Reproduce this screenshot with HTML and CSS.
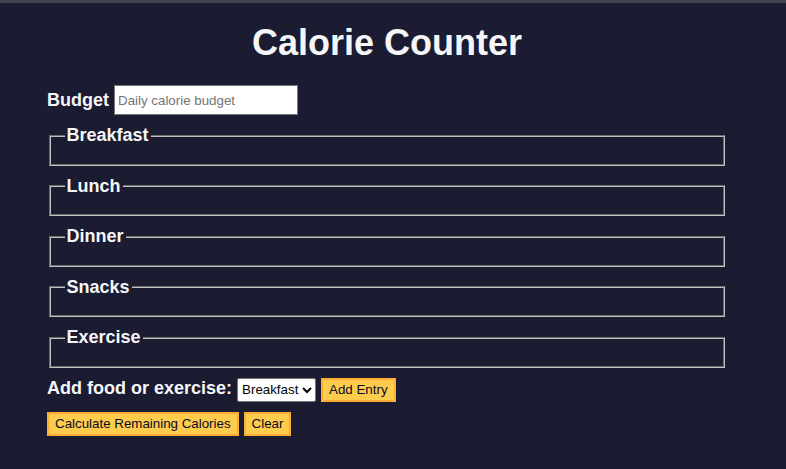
FILE: index.html
```html
<!DOCTYPE html>
<html lang="en">
<head>
<meta charset="utf-8">
<title>Calorie Counter</title>
<link rel="stylesheet" href="styles.css">
</head>
<body>
<div class="topbar"></div>
<main class="page">
  <h1 class="title">Calorie Counter</h1>
  <form class="container">
    <div class="budget-row">
      <label class="label" for="budget">Budget</label>
      <input class="budget-input" type="number" id="budget" placeholder="Daily calorie budget">
    </div>
    <fieldset class="meal"><legend class="legend">Breakfast</legend></fieldset>
    <fieldset class="meal"><legend class="legend">Lunch</legend></fieldset>
    <fieldset class="meal"><legend class="legend">Dinner</legend></fieldset>
    <fieldset class="meal"><legend class="legend">Snacks</legend></fieldset>
    <fieldset class="meal"><legend class="legend">Exercise</legend></fieldset>
    <div class="controls">
      <label class="label" for="entry-dropdown">Add food or exercise:</label>
      <select class="dropdown" id="entry-dropdown">
        <option>Breakfast</option>
        <option>Lunch</option>
        <option>Dinner</option>
        <option>Snacks</option>
        <option>Exercise</option>
      </select>
      <button class="btn" type="button">Add Entry</button>
    </div>
    <div class="actions">
      <button class="btn" type="button">Calculate Remaining Calories</button>
      <button class="btn" type="button">Clear</button>
    </div>
  </form>
</main>
</body>
</html>
```

FILE: styles.css
```css
html, body {
  margin: 0;
  padding: 0;
  background: #1b1b32;
}

body {
  color: #f5f6f7;
  font-family: "Liberation Sans", Arial, sans-serif;
  font-size: 18px;
  min-height: 469px;
}

.topbar {
  height: 3px;
  background: #42424c;
}

.page {
  width: 758px;
  margin-left: 8px;
}

.title {
  font-size: 36px;
  font-weight: bold;
  text-align: center;
  margin: 19px 0 22px;
  line-height: 41px;
}

.container {
  width: 680px;
  margin: 0 auto;
}

.label {
  font-weight: bold;
  font-size: 18px;
}

.budget-row {
  display: flex;
  align-items: center;
  gap: 5px;
  height: 30px;
  margin-bottom: 10px;
}

.budget-input {
  box-sizing: border-box;
  width: 184px;
  height: 30px;
  padding: 0 3px;
  border: 1px solid #767676;
  background: #fff;
  color: #000;
  font-family: "Liberation Sans", Arial, sans-serif;
  font-size: 13.333px;
  margin: 0;
}

.budget-input::placeholder {
  color: #757575;
}

.meal {
  margin: 0 2px 10px;
  padding: 6.3px 13.5px 11.25px;
  border: 2px groove #c0c0c0;
}

.legend {
  font-weight: bold;
  font-size: 18px;
  padding: 0 2px;
}

.controls {
  display: flex;
  align-items: baseline;
  gap: 5px;
  margin-bottom: 10px;
}

.dropdown {
  box-sizing: border-box;
  width: 79px;
  height: 24px;
  font-family: "Liberation Sans", Arial, sans-serif;
  font-size: 13.333px;
  background: #fff;
  color: #000;
  border: 1px solid #767676;
  border-radius: 2px;
  margin: 0;
}

.btn {
  box-sizing: border-box;
  height: 24px;
  padding: 0 6px;
  margin: 0;
  background: #fecc4c;
  border: 2px solid #feac32;
  color: #0a0a23;
  font-family: "Liberation Sans", Arial, sans-serif;
  font-size: 13.333px;
  cursor: pointer;
}

.actions {
  display: flex;
  gap: 5px;
}
```
